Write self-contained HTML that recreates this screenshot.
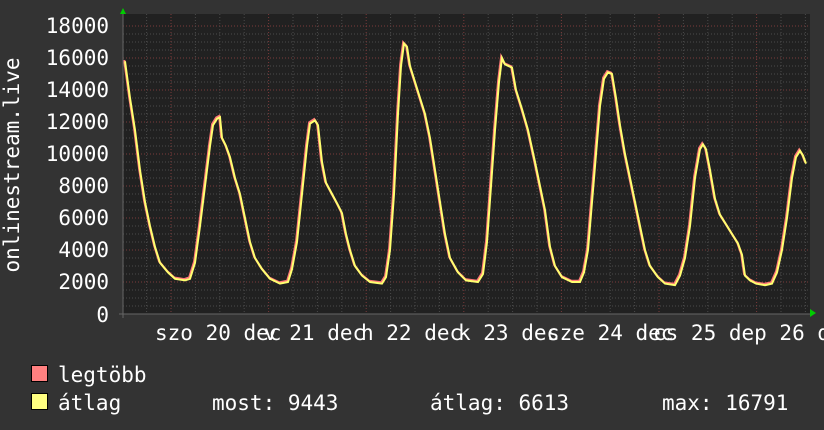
<!DOCTYPE html>
<html><head><meta charset="utf-8"><style>
body{margin:0;background:#333;}
svg{display:block}
text{font-family:"DejaVu Sans Mono","Liberation Mono",monospace;font-size:21px;fill:#fff}
</style></head><body>
<svg width="824" height="430" viewBox="0 0 824 430" xmlns="http://www.w3.org/2000/svg">
<rect width="824" height="430" fill="#333"/>
<rect x="123" y="14" width="687" height="300" fill="#212121"/>
<g id="grid"></g>
<polyline id="r" fill="none" stroke="#ff7878" stroke-width="2.2"/>
<polyline id="y" fill="none" stroke="#ffff70" stroke-width="2"/>
<line x1="123" y1="12" x2="123" y2="318" stroke="#666" stroke-width="1"/>
<line x1="119" y1="314" x2="810" y2="314" stroke="#666" stroke-width="1"/>
<polygon points="120,14 126,14 123,8" fill="#0c0"/>
<polygon points="810,309 810,317 816,313" fill="#0c0"/>
<g text-anchor="end">
<text x="109" y="33">18000</text><text x="109" y="65">16000</text><text x="109" y="97">14000</text>
<text x="109" y="129">12000</text><text x="109" y="161">10000</text><text x="109" y="193">8000</text>
<text x="109" y="225">6000</text><text x="109" y="257">4000</text><text x="109" y="289">2000</text>
<text x="109" y="322">0</text>
</g>
<text transform="translate(19,165) rotate(-90)" text-anchor="middle">onlinestream.live</text>
<g>
<text x="155" y="340">szo 20 dec</text>
<text x="264" y="340">v 21 dec</text>
<text x="361" y="340">h 22 dec</text>
<text x="458" y="340">k 23 dec</text>
<text x="547" y="340">sze 24 dec</text>
<text x="653" y="340">cs 25 dep 26 d</text>
</g>
<rect x="31.5" y="365.5" width="16" height="16" fill="#ff8080" stroke="#000"/>
<rect x="31.5" y="393.5" width="16" height="16" fill="#ffff80" stroke="#000"/>
<text x="58" y="382">legtöbb</text>
<text x="58" y="410">átlag</text>
<text x="212" y="410">most: 9443</text>
<text x="430" y="410">átlag: 6613</text>
<text x="662" y="410">max: 16791</text>
</svg>
<script>
var g=document.getElementById('grid'),s='';
for(var i=0;i<37;i++){var y=26+i*8;if(y>314)break;var red=(i%4==0);
s+='<line x1="123" x2="810" y1="'+y+'" y2="'+y+'" stroke="'+(red?'#7a3a3a':'#4a4a4a')+'" stroke-dasharray="1,2"/>';}
for(var x=146.6;x<810;x+=24.4){var red=Math.abs(((x-171)/97.6)-Math.round((x-171)/97.6))<0.05;
s+='<line y1="14" y2="314" x1="'+x.toFixed(1)+'" x2="'+x.toFixed(1)+'" stroke="'+(red?'#7a3a3a':'#4a4a4a')+'" stroke-dasharray="1,2"/>';}
g.innerHTML=s;
var d=[125,15800,130,13500,135,11500,140,9000,145,7000,150,5500,155,4200,160,3200,168,2600,175,2200,185,2100,190,2200,195,3200,200,5500,205,8000,210,10500,213,11800,217,12200,220,12300,222,11000,226,10500,230,9800,235,8500,240,7500,245,6000,250,4500,255,3500,262,2800,270,2200,280,1900,288,2000,292,2800,297,4500,302,7500,307,10500,310,11900,315,12100,318,11800,322,9500,326,8200,332,7500,338,6800,342,6300,346,5000,350,4000,355,3000,362,2400,370,2000,382,1900,386,2300,390,4000,394,7500,398,12500,401,15500,404,16900,407,16700,410,15500,415,14500,420,13500,425,12500,430,11000,435,9000,440,7000,445,5000,450,3500,458,2600,466,2100,478,2000,483,2500,487,4500,491,8000,495,11500,499,14500,502,16000,505,15600,512,15400,516,14000,522,12800,528,11500,535,9500,540,8000,545,6500,550,4200,555,3000,562,2300,572,2000,580,2000,584,2600,588,4000,592,7000,596,10000,600,13000,604,14700,608,15100,612,15000,616,13500,620,11800,625,10000,630,8500,635,7000,640,5500,645,4000,650,3000,658,2300,665,1900,675,1800,680,2400,685,3500,690,5500,695,8500,700,10300,703,10600,706,10300,710,9000,715,7200,720,6200,726,5600,732,5000,738,4400,742,3700,745,2400,750,2100,756,1900,765,1800,772,1900,777,2600,782,4000,787,6000,792,8500,796,9800,800,10200,803,9900,806,9400];
var p='',q='';for(var i=0;i<d.length;i+=2){var Y=314-d[i+1]*0.016;p+=d[i]+','+Y.toFixed(1)+' ';q+=(d[i]-0.8)+','+(Y-1.2).toFixed(1)+' ';}
document.getElementById('y').setAttribute('points',p);document.getElementById('r').setAttribute('points',q);
</script>
</body></html>
